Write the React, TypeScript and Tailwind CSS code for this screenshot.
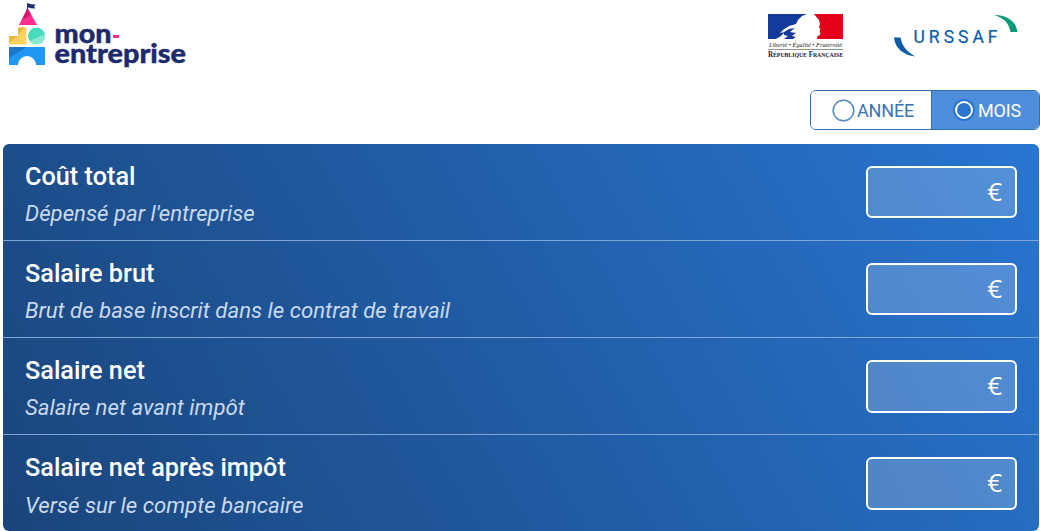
import { useState } from "react";

const rows = [
  { title: "Coût total", hint: "Dépensé par l'entreprise" },
  { title: "Salaire brut", hint: "Brut de base inscrit dans le contrat de travail" },
  { title: "Salaire net", hint: "Salaire net avant impôt" },
  { title: "Salaire net après impôt", hint: "Versé sur le compte bancaire" },
];

function MonEntrepriseLogo() {
  return (
    <svg width="190" height="75" viewBox="0 0 190 75" role="img" aria-label="mon-entreprise">
      <path d="M27.500 9V4" stroke="#1d2a6d" strokeWidth="1" />
      <path d="M27 3l4 1.200 4.600.2-1.500 2 1.300 2.200-4.500-.4L27 7z" fill="#1d2a6d" />
      <path d="M27.500 8L37 25H19z" fill="#ff2b8f" />
      <path d="M27.500 8l3.700 6.700L22 20z" fill="#cf1a70" />
      <path d="M18 27.500h8.500v17H9v-8.500h9z" fill="#ffd35c" />
      <path d="M18 27.500h7L18 35zM9 36h9L9 43z" fill="#e9b93c" />
      <circle cx="36.500" cy="36" r="8.500" fill="#46dcba" />
      <path d="M44.700 34a8.500 8.500 0 0 1-15 7z" fill="#86e8cf" />
      <path d="M9 47h36v18h-9a9 9 0 0 0-18 0H9z" fill="#2196f3" />
      <path d="M9 47h18L9 58z" fill="#1c78c5" />
      <g fill="#1d2a6d" stroke="#1d2a6d" strokeWidth=".4" fontFamily="Lato, sans-serif" fontWeight="900" fontSize="26">
        <text x="54.500" y="42.800" textLength="57" lengthAdjust="spacingAndGlyphs">mon</text>
        <text x="54.500" y="63" textLength="131.500" lengthAdjust="spacingAndGlyphs">entreprise</text>
      </g>
      <path d="M113 35h6v3h-6z" fill="#ff2b8f" />
    </svg>
  );
}

function RepubliqueLogo() {
  return (
    <svg width="76" height="46" viewBox="0 0 76 46" role="img" aria-label="République Française">
      <path d="M0 0h39l-5 2-4 4-2 4-7 2-6 4-3 3 5-1-4 4-5 3H0z" fill="#143a9c" />
      <path d="M16 18l5-3 6-1-5 4 6 1-4 3 4 1-3 2h-9l4-3-4-1z" fill="#143a9c" />
      <path d="M46 0h29v25H49l.5-3 2.500-1 .3-2.500-.7-1.500.8-1.500-1.400-2.500 1-3-1-4-2.500-3z" fill="#e2001a" />
      <g fill="#222" fontFamily="Liberation Serif, serif">
        <text x="1" y="33" fontSize="7" fontStyle="italic" textLength="73" lengthAdjust="spacingAndGlyphs">Liberté • Égalité • Fraternité</text>
        <path d="M0 35h75v.6H0z" />
        <text x="0" y="43.300" fontSize="7.500" fontWeight="700" textLength="75" lengthAdjust="spacingAndGlyphs">R<tspan fontSize="6.200">ÉPUBLIQUE</tspan> F<tspan fontSize="6.200">RANÇAISE</tspan></text>
      </g>
    </svg>
  );
}

function UrssafLogo() {
  return (
    <svg width="126" height="44" viewBox="0 0 126 44" role="img" aria-label="Urssaf">
      <path d="M0 23.500h6.500C8 32 13 38 21.500 42.500 9 41 1 34 0 23.500z" fill="#0a5ca8" />
      <path d="M100 1c13 0 22 6 23.500 17h-7C115 9 110 4 100 1z" fill="#0a9a78" />
      <text x="19.500" y="29" fontFamily="Roboto, sans-serif" fontSize="17.500" fill="#0a5ca8" stroke="#0a5ca8" strokeWidth=".2" textLength="84">URSSAF</text>
    </svg>
  );
}

export default function App() {
  const [period, setPeriod] = useState("mois");
  return (
    <main className="h-[531px] w-[1040px] overflow-hidden bg-white font-['Roboto',sans-serif]">
      <header className="flex h-[90px] items-start justify-between">
        <MonEntrepriseLogo />
        <div className="flex items-start gap-[50px] pr-5 pt-3.5">
          <RepubliqueLogo />
          <UrssafLogo />
        </div>
      </header>
      <div className="flex h-[54px] justify-end">
        <div className="flex h-10 w-[230px] overflow-hidden rounded-md border border-[#2f6db5] text-[18px] tracking-[-0.15px]">
          <button onClick={() => setPeriod("annee")} aria-pressed={period === "annee"} className="flex w-[121px] items-center gap-[3px] border-r border-[#2f6db5] bg-white pl-[22px] text-[#3a74b8]">
            <span className="size-[21px] shrink-0 rounded-full border-[1.5px] border-[#3470b8] shadow-[0_0_0_0.5px_#3470b8]" />
            ANNÉE
          </button>
          <button onClick={() => setPeriod("mois")} aria-pressed={period === "mois"} className="flex flex-1 items-center gap-[3px] bg-[#4f8edb] pl-[21px] text-white">
            <span className="flex size-[22px] shrink-0 items-center justify-center rounded-full bg-[#2975d1]">
              <span className="size-[18px] rounded-full border-2 border-white" />
            </span>
            MOIS
          </button>
        </div>
      </div>
      <section className="ml-[3px] mr-px h-[387px] overflow-hidden rounded-md bg-[linear-gradient(60deg,#1a457b_0%,#2975d1_100%)]">
        {rows.map((row) => (
          <label key={row.title} className="group flex h-[97px] items-start justify-between border-b border-[#7fa6d6] px-[22px] pt-[22px] last:border-b-0">
            <span className="flex flex-col text-white">
              <span className="mt-[-4px] text-[25.250px] font-medium leading-[30px]">{row.title}</span>
              <span className="mt-[7px] text-[22.200px] italic leading-[28px] text-[#c9d9ee] group-last:mt-[8px]">{row.hint}</span>
            </span>
            <span className="flex h-[52px] w-[151px] items-center justify-end rounded-md border-2 border-white bg-white/20 pb-[2px] pr-[13px] font-['Open_Sans',sans-serif] text-[26px] font-medium text-white group-last:h-[53px] group-nth-3:h-[53px]">
              €
            </span>
          </label>
        ))}
      </section>
    </main>
  );
}
